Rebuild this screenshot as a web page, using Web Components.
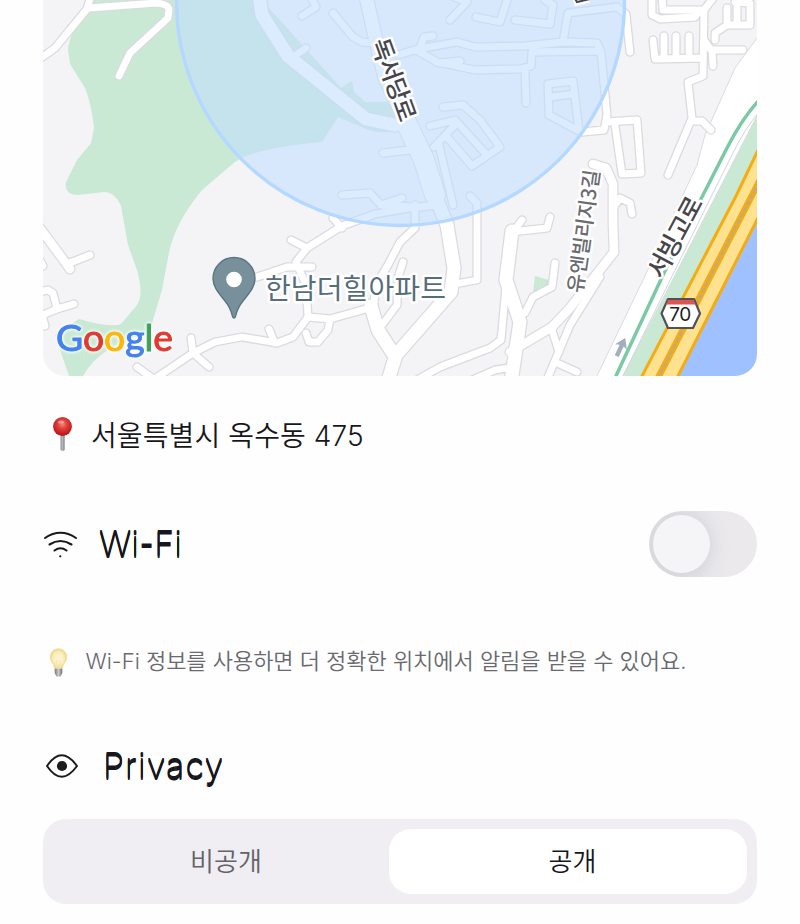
<!DOCTYPE html>
<html lang="ko">
<head>
<meta charset="utf-8">
<title>위치 설정</title>
<style>
html,body{margin:0;background:#fff}
body{font-family:Inter,"Noto Sans CJK KR",sans-serif;color:#17171b}
</style>
</head>
<body>
<location-settings></location-settings>

<template id="t-settings">
<style>
:host{display:flex;flex-direction:column;box-sizing:border-box;width:800px;height:924px;padding:0 43px;background:#fefefe;overflow:hidden}
address-line{margin-top:31px}
.wifi{margin-top:49.500px}
hint-line{margin-top:61.500px}
.privacy{margin-top:49px}
segmented-control{margin-top:20px}
</style>
<location-map></location-map>
<address-line>서울특별시 옥수동 475</address-line>
<section-row class="wifi" style="--gap:21px;--size:34px;--track:.1px">
  <wifi-icon slot="icon"></wifi-icon>Wi-Fi<toggle-switch slot="end"></toggle-switch>
</section-row>
<hint-line>Wi-Fi 정보를 사용하면 더 정확한 위치에서 알림을 받을 수 있어요.</hint-line>
<section-row class="privacy" style="--gap:22px;--size:34px;--track:1.1px">
  <eye-icon slot="icon"></eye-icon>Privacy
</section-row>
<segmented-control><segment-item>비공개</segment-item><segment-item selected>공개</segment-item></segmented-control>
</template>

<template id="t-map">
<style>
:host{display:block;flex:none;height:376px;border-radius:0 0 22px 22px;overflow:hidden;background:#f4f4f7}
svg{display:block}
.r{fill:none;stroke-linecap:round;stroke-linejoin:round}
.c{stroke:#dbdae1}.f{stroke:#fff}
text{font-family:"Noto Sans CJK KR",sans-serif;paint-order:stroke;stroke:#fff;stroke-width:5px;stroke-linejoin:round;fill:#46464b}
.brand{font-family:Lato,sans-serif;stroke-width:1px;filter:drop-shadow(0 0 1.500px #fff) drop-shadow(0 0 1.500px #fff)}
.blue{fill:#4681f0;stroke:#4681f0}.red{fill:#df3b32;stroke:#df3b32}.yellow{fill:#fbb70b;stroke:#fbb70b}.green{fill:#3ba258;stroke:#3ba258}
</style>
<svg width="714" height="376" viewBox="43 0 714 376">
<defs>
<g id="small">
<path d="M34 63L55 48L87 9L91-5M89 8L156 3Q168 4 169 9L168 18L130 53L119 76"/>
<path d="M34 250L43 266M67 264L90 255M34 293L48 290L53 293L57 309L74 304M57 309L38 317M43 318L45 326"/>
<path d="M137 367L155 380M150 382L193 353L215 342L242 337L277 343L293 337L308 317L306 285L296 262L307 248L342 226L375 214L410 208L437 205M191 338L193 353L209 367M269 329L275 343M257 277L287 267L312 267M291 240L307 248M333 218L342 228"/>
<path d="M308 317L330 319L373 307M330 319L328 330L318 342L309 342L306 333M403 262L398 278L397 305L382 325M415 205L415 228L400 242L388 265L376 285L374 303"/>
<path d="M342 195L370 193L381 205L402 198M381 205L415 207M470 196L477 203L477 280L455 284"/>
<path d="M310-5L316 7L302 16M333 13L353 37L362 42L375 43M293 57L306 48M398 55L418 49L457 42L475 47L525 46L563 42L597 43L601 52L607 115L604 130L582 132M418 51L437 62L475 70L520 69L531 66L532 52L598 51M440 63L460 61M420 48L424 37L433 36M450 20L467 2L452-4M476 17L500 22L508-3M515 20L550 24L553 5L545 0M563 42L568 13L617 7L626 14L630 52M525 70L526 103"/>
<path d="M548 84L573 81L579 131L549 115ZM550 97L574 94M443 107L463 105L480 120L500 147L472 166L447 137M430 126L455 120L486 154M456 124L434 147M383 153L410 150M439 145L453 205M607 122L637 120L641 173L622 174L615 125"/>
<path d="M652-3L652 15L660 19L695 17L700 10M662-5L663 10L704 10M714-3L704 10L703 76L688 82L692 118L668 175M692 121L702 121L711 130M653 40L655 59L703 58M664 36L664 58M676 36L676 58M689 36L689 58M704 40L711 50L743 50M712 50L713 66M715 40L715 33L727 25L750 25L750 3L735 2M727 8L727 25M737-3L737 25"/>
<path d="M511 232L547 228L550 217M516 228L522 220M555 263L552 287L533 297L525 313M613 208L620 198L630 203L632 214M600 277L570 325L546 382M551 327L559 352M557 363L577 372M507 275L501 340L490 348L440 367L410 384M470 381L495 370L508 368"/>
</g>
<g id="mid">
<path d="M34 220L65 262L70 269M593 164L606 168L613 184L613 223L614 252L570 308L552 327L510 352"/>
</g>
<g id="wide">
<path d="M259-5L262 15L288 56L335 94L366 119L395 125M365-8L377 45L385 78L404 118L422 160L438 203L447 225L454 268L451 292L396 355L387 384M371 306L378 330L394 355M512 231L506 280L520 322L511 382"/>
</g>
</defs>
<path fill="#c9e9d4" d="M87 8Q70 30 68 50L70 64L85 88Q91 102 94 128L91 143L77 160L66 182Q64 195 78 195L104 192Q115 192 121 206L128 245L137 270Q144 295 137 305L121 324Q110 328 79 319L55 335L69 376H83Q92 360 108 350L150 330L162 290L168 258Q173 225 202 190L235 162Q255 148 322 142L338 117L366 129Q378 134 398 131V102H365L354 92L352 81L341 88L260-2H91Z"/>
<path fill="#c9e9d4" d="M535 276L549 280L547 290L533 293Z"/>
<path fill="#c9e9d4" d="M757 96L615 376H642L757 152Z"/>
<path fill="#dfdfe5" d="M757 86L740 116L757 102Z"/>
<path fill="#fff" stroke="#dbdae1" d="M760 34L735 68L705 135L697 165L643 280L596 378H622L760 110Z"/>
<use href="#small" class="r c" stroke-width="9.4"/><use href="#mid" class="r c" stroke-width="11"/><use href="#wide" class="r c" stroke-width="15.5"/>
<path class="r c" stroke-width="22" d="M405 120L424 160L435 195"/>
<use href="#small" class="r f" stroke-width="6.8"/><use href="#mid" class="r f" stroke-width="8.6"/><use href="#wide" class="r f" stroke-width="13"/>
<path class="r f" stroke-width="20" d="M405 120L424 160L435 195"/>
<path fill="none" stroke="#fff" stroke-width="5" d="M760 105Q745 120 730 150L707 196L619 376"/>
<path fill="none" stroke="#d0d5d8" d="M760 111Q745 128 733 153L709 201L623 376"/>
<path fill="none" stroke="#7bc9a5" stroke-width="3.5" d="M760 99Q743 117 728 146L703 195L664 273L615 378"/>
<path fill="#a0c1ff" d="M757 220V376H678Z"/>
<path fill="#ffe290" d="M757 152V220L678 376H642Z"/>
<g fill="none" stroke="#f5ac13"><path stroke-width="3" d="M760 146L736 196L641 378M760 214L677 378"/><path stroke-width="6.5" d="M762 176L658 378"/></g>
<path fill="none" stroke="#b5aa96" stroke-width="2.2" stroke-dasharray="5 2" d="M762 176L658 378"/>
<circle cx="400.5" cy="1.5" r="224" fill="#c1ddff" fill-opacity=".57" stroke="#b4d8ff" stroke-width="3.4"/>
<g transform="translate(621 347) rotate(25)" fill="#a3aebd"><path d="M0-10L6.500 0L2.200-1.500V10H-2.200V-1.500L-6.500 0Z"/></g>
<path fill="none" stroke="#fff" stroke-width="7" d="M575-3L577 2L589-1"/><path fill="none" stroke="#46464b" stroke-width="2" d="M574-3L577 2L590-1"/>
<text x="0" y="8" font-size="24.5" font-weight="500" text-anchor="middle" textLength="86" transform="translate(393 80) rotate(70)">독서당로</text>
<text x="0" y="9" font-size="25" font-weight="500" text-anchor="middle" textLength="88" transform="translate(675 237) rotate(-62)">서빙고로</text>
<text x="0" y="8" font-size="20.5" font-weight="500" text-anchor="middle" textLength="124" transform="translate(583 231) rotate(-82)" style="fill:#6b6b70">유엔빌리지3길</text>
<text x="265" y="299" font-size="28" font-weight="400" textLength="181" style="fill:#566d7b">한남더힐아파트</text>
<path fill="#78909c" stroke="#5b7582" stroke-width="1.4" d="M234 318C231 318 234 312 225 301C217 291 213 286 213 278.500A21 21 0 0 1 255 278.500C255 286 251 291 243 301C234 312 237 318 234 318Z"/><circle cx="234" cy="279.500" r="7.800" fill="#fff"/>
<path fill="#fff" stroke="#515158" stroke-width="2.200" stroke-linejoin="round" d="M661.500 313.500L668 299H694L700 313.500L693 328H668Z"/><path fill="#dc5454" d="M668 300H693.500L695.500 304.500H666Z"/>
<text x="680.300" y="321" text-anchor="middle" font-size="19" textLength="22" style="font-family:Inter,sans-serif;fill:#222;stroke:none">70</text>
<text class="brand" x="56" y="350.500" font-size="37.500" textLength="117" lengthAdjust="spacingAndGlyphs"><tspan class="blue">G</tspan><tspan class="red">o</tspan><tspan class="yellow">o</tspan><tspan class="blue">g</tspan><tspan class="green">l</tspan><tspan class="red">e</tspan></text>
</svg>
</template>

<template id="t-address">
<style>
:host{display:flex;align-items:center;height:54px;gap:17px;padding-left:8px;font-size:28px;line-height:54px;white-space:nowrap;font-weight:350}
svg{flex:none}span{letter-spacing:.1px;padding-top:3px}
</style>
<svg width="23" height="38" viewBox="0 0 23 38"><defs><radialGradient id="b" cx=".5" cy=".38" r=".6"><stop offset="0" stop-color="#f4877c"/><stop offset=".4" stop-color="#e0413b"/><stop offset="1" stop-color="#b91319"/></radialGradient><linearGradient id="n"><stop offset="0" stop-color="#777"/><stop offset=".4" stop-color="#c5c5c8"/><stop offset="1" stop-color="#77777c"/></linearGradient></defs><path fill="url(#n)" d="M9.600 17H13.600V35Q11.600 37 9.600 35Z"/><circle cx="11.500" cy="11.500" r="9.400" fill="url(#b)"/><ellipse cx="10" cy="7" rx="3" ry="1.600" fill="#f7aaa0" opacity=".8"/></svg>
<span><slot></slot></span>
</template>

<template id="t-row">
<style>
:host{display:flex;align-items:center;height:66px}
.label{margin-left:var(--gap);flex:1;font:200 var(--size)/66px Inter,sans-serif;letter-spacing:var(--track);text-shadow:0 .8px #17171b,0 -.8px #17171b,0 1.5px #17171b}
</style>
<slot name="icon"></slot><span class="label"><slot></slot></span><slot name="end"></slot>
</template>

<template id="t-wifi">
<style>:host{display:block;width:35px;height:66px}svg{display:block}</style>
<svg width="35" height="66" viewBox="43 510 35 66" fill="none" stroke="#19191c" stroke-width="2.100" stroke-linecap="round"><path d="M45 537Q60.500 526.500 76 537M49.500 543.500Q60.500 536.500 71.500 543.500M54.500 549.500Q60.500 545 66.500 549.500"/><circle cx="60.300" cy="555.300" r="1.100" fill="#19191c" stroke="none"/></svg>
</template>

<template id="t-eye">
<style>:host{display:block;width:38px;height:66px}svg{display:block}</style>
<svg width="38" height="66" viewBox="43 733 38 66"><path d="M47 766Q61.500 744.500 77 766Q61.500 787.500 47 766Z" fill="none" stroke="#1c1c1f" stroke-width="2" stroke-linejoin="round"/><circle cx="62" cy="766" r="5.100" fill="#1c1c1f"/></svg>
</template>

<template id="t-toggle">
<style>
:host{display:flex;align-items:center;box-sizing:border-box;width:108px;height:66px;border-radius:33px;padding-left:4px;background:linear-gradient(90deg,#dddce0 20%,#e9e8eb 60%,#ebe9ec 80%);overflow:hidden}
i{width:57px;height:58px;border-radius:50%;background:#f5f5f8;box-shadow:3px 2px 14px #c9c8ce80}
</style><i></i>
</template>

<template id="t-hint">
<style>
:host{display:flex;align-items:center;height:46px;gap:17.500px;padding-left:6px;font-size:22px;line-height:46px;font-weight:350;color:#69696e;white-space:nowrap}
svg{flex:none;margin-top:3px}span{letter-spacing:-.03px}
</style>
<svg width="19" height="30" viewBox="0 0 19 30"><defs><radialGradient id="g"><stop offset="0" stop-color="#fff6dc"/><stop offset=".6" stop-color="#fbefbf"/><stop offset="1" stop-color="#eed985"/></radialGradient><linearGradient id="m"><stop offset="0" stop-color="#77777b"/><stop offset=".5" stop-color="#cacace"/><stop offset="1" stop-color="#707075"/></linearGradient></defs><path fill="url(#g)" stroke="#eddb93" stroke-width=".7" d="M5.500 20Q5.300 17 2.500 13.500A8.300 8.300 0 1 1 16.500 13.500Q13.700 17 13.500 20Z"/><path d="M8 20L7.500 12M11 20L11.500 12" fill="none" stroke="#f6e6ae"/><path fill="url(#m)" d="M5.700 20.500H13.300V25L11.500 28.500H7.500L5.700 25Z"/></svg>
<span><slot></slot></span>
</template>

<template id="t-segmented">
<style>
:host{display:grid;flex:none;grid-template-columns:346px 358px;height:85px;box-sizing:border-box;padding:10px 10px 10.500px 0;border-radius:23px;background:#f0eef2}
</style><slot></slot>
</template>

<template id="t-segment">
<style>
:host{display:flex;align-items:center;justify-content:center;box-sizing:border-box;padding:2px 0 0 20px;border-radius:22px;font-size:26px;line-height:1;font-weight:350;color:#636368}
:host([selected]){padding:2px 0 0 9px;background:#fff;color:#17171b}
</style><span><slot></slot></span>
</template>

<script>
for (const [tag, id] of Object.entries({
  'location-map':'t-map','address-line':'t-address','section-row':'t-row','wifi-icon':'t-wifi',
  'eye-icon':'t-eye','toggle-switch':'t-toggle','hint-line':'t-hint','segment-item':'t-segment',
  'segmented-control':'t-segmented','location-settings':'t-settings'
})) {
  customElements.define(tag, class extends HTMLElement {
    constructor() {
      super();
      this.attachShadow({mode:'open'}).append(document.getElementById(id).content.cloneNode(true));
    }
  });
}
</script>
</body>
</html>
